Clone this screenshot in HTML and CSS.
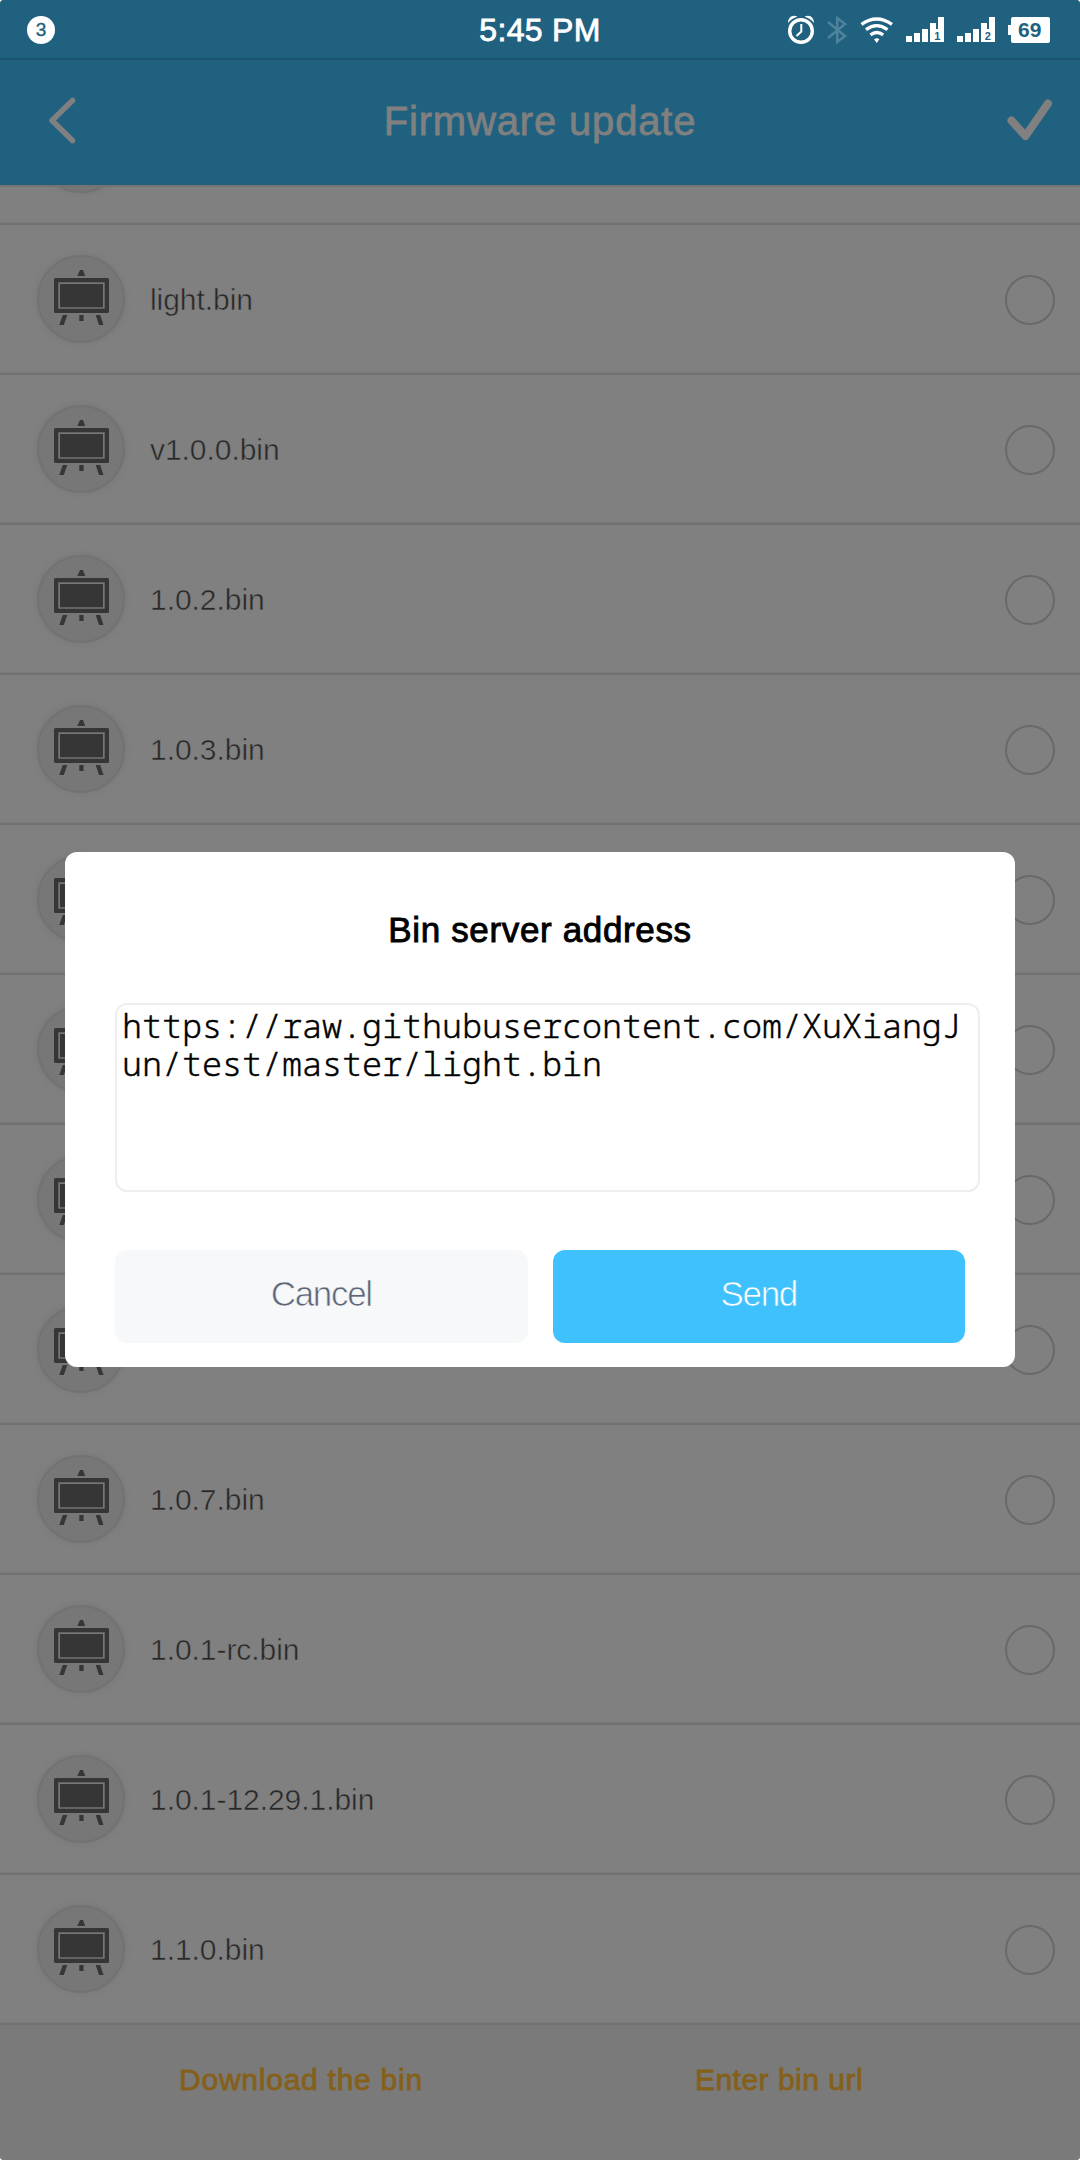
FILE: index.html
```html
<!DOCTYPE html>
<html lang="en">
<head>
<meta charset="utf-8">
<title>Firmware update</title>
<link rel="stylesheet" href="styles.css">
</head>
<body>
<svg width="0" height="0" class="defs">
  <symbol id="board" viewBox="0 0 56 56">
    <path d="M26 0h3l2.200 6h-7.900z"/>
    <rect x="0" y="8" width="55" height="35" rx="1.500"/>
    <rect class="gap" x="4.300" y="12.300" width="46.400" height="26.400"/>
    <path d="M8.800 45h4.500l-3.500 10h-4.500zM41.700 45h4.500l3.300 10h-4.500zM25.300 45h4.300v6h-4.300z"/>
    <rect x="6" y="14" width="43" height="23.300"/>
  </symbol>
</svg>
<div class="screen">
  <header class="statusbar">
    <span class="count">3</span>
    <span class="clock">5:45 PM</span>
    <svg class="indicators" viewBox="0 0 264 30">
      <g fill="none" stroke="#fff">
        <circle cx="13" cy="15" r="11.300" stroke-width="3.400"/>
        <path d="M13.300 8v7.500l-4.800 4.500" stroke-width="2"/>
      </g>
      <path fill="#fff" d="M0 7C0 1 5 -2 9.500 0.800C5.500 2 2 4 0 7zM26 7C26 1 21 -2 16.500 0.800C20.500 2 24 4 26 7z"/>
      <path fill="none" stroke="#4f829b" stroke-width="2.500" d="M40 6l17 14l-7.800 6v-24l7.800 6l-17 14"/>
      <g fill="none" stroke="#fff" stroke-width="3.300">
        <path d="M73.500 8.300q15-10.500 30.500 0"/>
        <path d="M78 13.600q10.700-8 21.500 0"/>
        <path d="M82.500 18.800q6.200-4.500 12.700 0"/>
      </g>
      <path fill="#fff" d="M86 23.300q2.700-2.200 5.400 0l-2.700 3.700z"/>
      <path fill="#fff" d="M118 20h6v6h-6zM126 17h6v9h-6zM134 13h6v13h-6zM142 7h6v6h2v-12h6v25h-14z"/>
      <path fill="#fff" d="M169 20h6v6h-6zM177 17h6v9h-6zM185 13h6v13h-6zM193 7h6v6h2v-12h6v25h-14z"/>
      <text class="sim" x="146.300" y="23.500">1</text>
      <text class="sim" x="196.800" y="23.500">2</text>
      <path fill="#fff" d="M220 9h3v-6q0-2 2-2h35q2 0 2 2v22q0 2-2 2h-35q-2 0-2-2v-6h-3z"/>
      <text class="charge" x="230" y="21.300">69</text>
    </svg>
  </header>
  <nav class="titlebar">
    <svg class="back" viewBox="0 0 28 48"><path d="M24.500 3.500L4 23.500L24.500 43.500"/></svg>
    <h1>Firmware update</h1>
    <svg class="done" viewBox="0 0 46 44"><path d="M4.500 21.500L18.500 37L41 4.500"/></svg>
  </nav>
  <main class="list">
    <div class="row"><span class="avatar"><svg><use href="#board"/></svg></span><span class="name"></span><span class="radio"></span></div>
    <div class="row"><span class="avatar"><svg><use href="#board"/></svg></span><span class="name">light.bin</span><span class="radio"></span></div>
    <div class="row"><span class="avatar"><svg><use href="#board"/></svg></span><span class="name">v1.0.0.bin</span><span class="radio"></span></div>
    <div class="row"><span class="avatar"><svg><use href="#board"/></svg></span><span class="name">1.0.2.bin</span><span class="radio"></span></div>
    <div class="row"><span class="avatar"><svg><use href="#board"/></svg></span><span class="name">1.0.3.bin</span><span class="radio"></span></div>
    <div class="row"><span class="avatar"><svg><use href="#board"/></svg></span><span class="name"></span><span class="radio"></span></div>
    <div class="row"><span class="avatar"><svg><use href="#board"/></svg></span><span class="name"></span><span class="radio"></span></div>
    <div class="row"><span class="avatar"><svg><use href="#board"/></svg></span><span class="name"></span><span class="radio"></span></div>
    <div class="row"><span class="avatar"><svg><use href="#board"/></svg></span><span class="name"></span><span class="radio"></span></div>
    <div class="row"><span class="avatar"><svg><use href="#board"/></svg></span><span class="name">1.0.7.bin</span><span class="radio"></span></div>
    <div class="row"><span class="avatar"><svg><use href="#board"/></svg></span><span class="name">1.0.1-rc.bin</span><span class="radio"></span></div>
    <div class="row"><span class="avatar"><svg><use href="#board"/></svg></span><span class="name">1.0.1-12.29.1.bin</span><span class="radio"></span></div>
    <div class="row"><span class="avatar"><svg><use href="#board"/></svg></span><span class="name">1.1.0.bin</span><span class="radio"></span></div>
  </main>
  <footer class="actions">
    <span class="download">Download the bin</span>
    <span class="enter">Enter bin url</span>
  </footer>
  <section class="dialog">
    <h2>Bin server address</h2>
    <div class="url">https://raw.githubusercontent.com/XuXiangJun/test/master/light.bin</div>
    <div class="buttons">
      <button class="cancel">Cancel</button>
      <button class="send">Send</button>
    </div>
  </section>
</div>
</body>
</html>
```
FILE: styles.css
```css
* { box-sizing: border-box; }
body { margin: 0; background: #fff; font-family: "Liberation Sans", Arial, sans-serif; }
.defs { position: absolute; }
.screen {
  position: relative;
  display: flex;
  flex-direction: column;
  width: 1080px;
  height: 2160px;
  overflow: hidden;
  border-radius: 4px;
  background: #808080;
}
.statusbar {
  display: grid;
  grid-template-columns: 1fr auto 1fr;
  align-items: center;
  height: 60px;
  padding: 0 28px 0 27px;
  background: #20617f;
  border-bottom: 2px solid #1b526d;
  color: #fff;
}
.count {
  width: 28px;
  height: 28px;
  margin-top: 2px;
  border-radius: 50%;
  background: #fff;
  color: #20617f;
  font-size: 19px;
  line-height: 28px;
  text-align: center;
  -webkit-text-stroke: 0.4px;
}
.clock { font-size: 32px; line-height: 36px; margin: 1px 0 0 1px; letter-spacing: 0.3px; -webkit-text-stroke: 0.8px; }
.indicators { justify-self: end; width: 264px; height: 30px; margin-top: 4px; overflow: visible; }
.sim { font-size: 11px; font-weight: bold; fill: #20617f; }
.charge { font-size: 21px; font-weight: bold; fill: #20617f; }
.titlebar {
  display: grid;
  grid-template-columns: 1fr auto 1fr;
  align-items: center;
  height: 125px;
  padding: 0 27px;
  background: #20617f;
  color: #808080;
}
.titlebar svg { fill: none; stroke: #808080; stroke-linecap: round; stroke-linejoin: round; }
.back { width: 28px; height: 48px; margin: -3px 0 0 21px; stroke-width: 5.5; }
.done { width: 46px; height: 44px; margin-top: -4px; justify-self: end; stroke-width: 8; }
h1 { margin: -2px 0 0; font-size: 40px; font-weight: normal; letter-spacing: 0.84px; -webkit-text-stroke: 0.8px; }
.list { height: 1840px; overflow: hidden; border-top: 2px solid #737373; }
.row {
  display: flex;
  align-items: center;
  height: 150px;
  padding: 0 25px 0 37px;
  box-shadow: inset 0 -2px #717171, inset 0 -3px #7b7b7b;
}
.row:first-child { margin-top: -112px; }
.avatar {
  display: flex;
  justify-content: center;
  width: 88px;
  height: 88px;
  margin: -2px 0 0;
  padding: 13px 0 0 1px;
  border: 2px solid #727272;
  border-radius: 50%;
  background: #777;
  box-shadow: 0 0 6px #757575;
}
.avatar svg { width: 56px; height: 56px; fill: #363636; }
.gap { fill: #777; }
/* A stroke in the surface colour thins the regular face to a light weight. */
.name { flex: 1; padding-left: 25px; color: #282828; font-size: 30px; line-height: 40px; letter-spacing: -0.05px; -webkit-text-stroke: 0.55px #808080; }
.radio { width: 50px; height: 50px; border: 2.5px solid #696969; border-radius: 50%; }
.actions {
  display: grid;
  grid-template-columns: 1fr 1fr;
  height: 135px;
  padding: 37px 62px 0;
  background: #7a7a7a;
  color: #85601a;
  text-align: center;
  font-size: 30px;
  line-height: 36px;
  -webkit-text-stroke: 0.8px;
}
.download { letter-spacing: 0.75px; }
.enter { letter-spacing: 0.5px; }
.dialog {
  position: absolute;
  left: 65px;
  top: 852px;
  width: 950px;
  height: 515px;
  padding: 58px 50px 0;
  border-radius: 12px;
  background: #fff;
}
h2 { margin: 0; text-align: center; font-size: 35px; line-height: 40px; font-weight: normal; color: #000; letter-spacing: 0.65px; -webkit-text-stroke: 0.9px; }
.url {
  width: 865px;
  height: 189px;
  margin-top: 53px;
  padding: 1px 5px;
  border: 2px solid #eee;
  border-radius: 12px;
  color: #000;
  font: 300 33.35px/38px "Noto Sans Mono", "DejaVu Sans Mono", monospace;
  -webkit-text-stroke: 0.5px;
  word-break: break-all;
}
.buttons { display: grid; grid-template-columns: 1fr 1fr; gap: 25px; margin-top: 58px; }
button { height: 93px; padding: 0 0 5px; border: 0; border-radius: 12px; font: 35px "Liberation Sans", Arial, sans-serif; letter-spacing: -1.3px; }
.cancel { background: #f7f8fa; color: #5c6677; -webkit-text-stroke: 0.7px #f7f8fa; }
.send { background: #3fc1fd; color: #fff; -webkit-text-stroke: 0.7px #3fc1fd; }
```
